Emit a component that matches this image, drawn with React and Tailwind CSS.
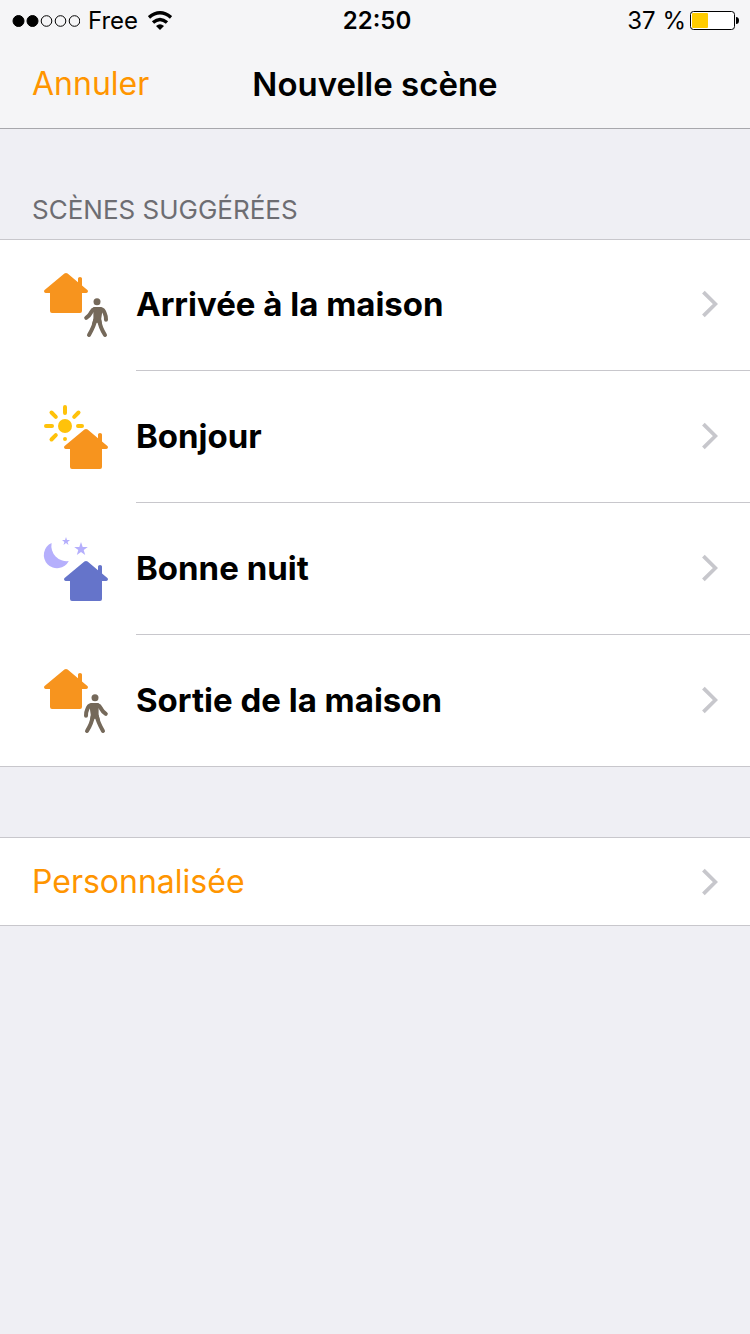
import React from "react";

const House = ({ x = 0, y = 0, color }) => (
  <path
    transform={`translate(${x} ${y})`}
    fill={color}
    d="M20.4 .6 Q22 -.6 23.6 .6 L34 9.2 V5.5 Q34 4 36 4 Q38 4 38 5.5 V12.6 L43.4 17 Q44.2 17.8 43.9 18.8 Q43.4 20 42 20 H38 V38 Q38 40 36 40 H8 Q6 40 6 38 V20 H2 Q.6 20 .1 18.8 Q-.2 17.8 .6 17 Z"
  />
);

const Walker = ({ flip }) => (
  <g transform={flip ? "translate(104 0) scale(-1 1)" : undefined} stroke="#75695a" fill="none" strokeLinecap="round" strokeLinejoin="round">
    <circle cx="53" cy="28.8" r="3.5" fill="#75695a" stroke="none" />
    <path d="M49.5 34 H57 L58.4 38 L57.2 46 L58 51 L56 52 L53 49.6 L50 52 L48 51 L49.4 46 V40 Z" fill="#75695a" stroke="none" />
    <path d="M50.6 36 Q48.5 36.6 46.8 39.8 Q45.6 42.4 42.2 44.8" strokeWidth="4" />
    <path d="M56.8 36 Q59.6 36.6 60.7 40.2 Q62 43 62 46.8" strokeWidth="4" />
    <path d="M51.2 47 Q50.2 53 45 62" strokeWidth="4" />
    <path d="M55.2 47 Q56 54 61 62" strokeWidth="4" />
  </g>
);

const Sun = () => (
  <g stroke="#ffc20a" strokeWidth="4" strokeLinecap="round">
    <circle cx="21" cy="21" r="7" fill="#ffc20a" stroke="none" />
    <path d="M21 2 V8 M2 21 H8 M34 21 H38 M7.5 7.5 L11.8 11.8 M34.5 7.5 L30.2 11.8 M7.5 34.5 L11.8 30.2 M21 34 V34.01" />
  </g>
);

const Moon = () => (
  <g fill="#b5affc">
    <path d="M7.6 6 A13.2 13.2 0 1 0 24.8 24 A15.4 15.4 0 0 1 7.6 6 Z" />
    <path d="M22 0 L23 3 H26 L23.6 4.9 L24.5 8 L22 6.1 L19.5 8 L20.4 4.9 L18 3 H21 Z" />
    <path d="M37 5 L38.7 9.9 H43.8 L39.7 13 L41.2 18 L37 15 L32.8 18 L34.3 13 L30.2 9.9 H35.3 Z" />
  </g>
);

const scenes = [
  { name: "Arrivée à la maison", icon: <><House color="#f7941e" /><Walker /></> },
  { name: "Bonjour", icon: <><Sun /><House x={20} y={24} color="#f7941e" /></> },
  { name: "Bonne nuit", icon: <><Moon /><House x={20} y={24} color="#6574ca" /></> },
  { name: "Sortie de la maison", icon: <><House color="#f7941e" /><Walker flip /></> },
];

const Chevron = () => (
  <svg className="w-4 h-7 shrink-0" viewBox="0 0 16 28" fill="none" stroke="#c7c7cc" strokeWidth="3.8" aria-hidden="true">
    <path d="M1.4 2.2 L13.4 14 L1.4 25.8" />
  </svg>
);

const StatusBar = () => (
  <div className="grid grid-cols-3 items-center h-10 pt-px pl-3 pr-2 text-2xl">
    <div className="flex items-center">
      <svg className="w-[68px] h-3 shrink-0" viewBox="0 0 68 12" fill="none" stroke="#000" aria-hidden="true">
        <circle cx="6.5" cy="6" r="5.5" fill="#000" />
        <circle cx="20.5" cy="6" r="5.5" fill="#000" />
        <circle cx="34.5" cy="6" r="5.3" />
        <circle cx="48.5" cy="6" r="5.3" />
        <circle cx="62.5" cy="6" r="5.3" />
      </svg>
      <span className="ml-2">Free</span>
      <svg className="w-6 h-5 ml-[10px] shrink-0" viewBox="0 0 24 20" fill="none" stroke="#000" strokeWidth="3.4" aria-hidden="true">
        <path d="M1 6.4 Q12 -2.8 23 6.4" />
        <path d="M5 11.6 Q12 5.4 19 11.6" />
        <path d="M8 15 Q12 11.4 16 15 L12 19 Z" fill="#000" stroke="none" />
      </svg>
    </div>
    <span className="text-center font-semibold">22:50</span>
    <div className="flex items-center justify-end">
      <span className="whitespace-nowrap">37 %</span>
      <svg className="w-[52px] h-5 ml-1 shrink-0" viewBox="0 0 52 20" fill="none" aria-hidden="true">
        <rect x=".5" y=".5" width="44" height="18" rx="3" fill="#fff" stroke="#000" />
        <rect x="2" y="2" width="16" height="15" rx="1" fill="#ffcc00" />
        <path d="M46 6 Q49 6 49 9.5 Q49 13 46 13 Z" fill="#000" />
      </svg>
    </div>
  </div>
);

const App = () => {
  return (
    <div className="min-h-screen bg-[#efeff4] text-black font-['Inter','Liberation_Sans',sans-serif]">
      <header className="bg-[#f5f5f7] border-b border-[#a7a7ac]">
        <StatusBar />
        <div className="grid grid-cols-[1fr_auto_1fr] items-center h-22 px-8">
          <button className="justify-self-start text-[32px] leading-10 text-[#ff9500]">Annuler</button>
          <h1 className="text-[33px] leading-10 font-semibold">Nouvelle scène</h1>
        </div>
      </header>

      <main>
        <h2 className="px-8 pt-16 pb-3 text-[26px] leading-[34px] text-[#6d6d72] uppercase">Scènes suggérées</h2>

        <ul className="bg-white shadow-[inset_0_1px_0_#c8c7cc]">
          {scenes.map((scene) => (
            <li key={scene.name} className="group last:border-b last:border-[#c8c7cc]">
              <button className="flex w-full pl-11 text-left">
                <svg className="w-16 h-[65px] mt-[33px] mr-7 shrink-0 overflow-visible" viewBox="0 -1 64 65" aria-hidden="true">
                  {scene.icon}
                </svg>
                <span className="flex flex-1 items-center justify-between h-33 pb-px pr-8 border-b border-[#c8c7cc] group-last:h-[131px] group-last:border-b-0">
                  <span className="text-[33px] leading-10 font-bold">{scene.name}</span>
                  <Chevron />
                </span>
              </button>
            </li>
          ))}
        </ul>

        <button className="flex items-center justify-between w-full h-[89px] mt-[70px] px-8 bg-white border-y border-[#c8c7cc] text-left">
          <span className="text-[32px] leading-10 text-[#ff9500]">Personnalisée</span>
          <Chevron />
        </button>
      </main>
    </div>
  );
};

export default App;
